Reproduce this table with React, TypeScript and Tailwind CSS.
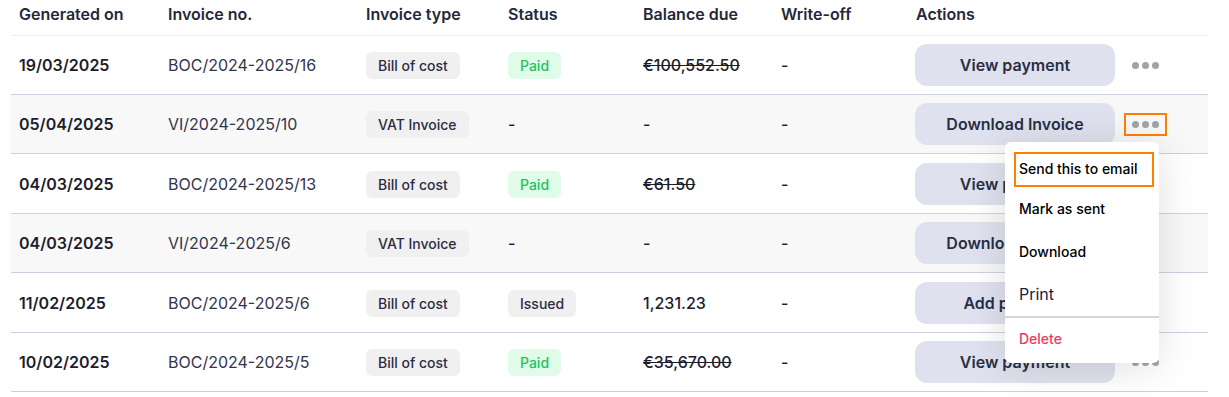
const rows = [
  { date: "19/03/2025", no: "BOC/2024-2025/16", type: "Bill of cost", status: "Paid", balance: "€100,552.50", strike: true, action: "View payment", alt: false, focus: false, h: "h-[59px]" },
  { date: "05/04/2025", no: "VI/2024-2025/10", type: "VAT Invoice", status: "", balance: "-", strike: false, action: "Download Invoice", alt: true, focus: true, h: "h-[59px]" },
  { date: "04/03/2025", no: "BOC/2024-2025/13", type: "Bill of cost", status: "Paid", balance: "€61.50", strike: true, action: "View payment", alt: false, focus: false, h: "h-[60px]" },
  { date: "04/03/2025", no: "VI/2024-2025/6", type: "VAT Invoice", status: "", balance: "-", strike: false, action: "Download Invoice", alt: true, focus: false, h: "h-[59px]" },
  { date: "11/02/2025", no: "BOC/2024-2025/6", type: "Bill of cost", status: "Issued", balance: "1,231.23", strike: false, action: "Add payment", alt: false, focus: false, h: "h-[60px]" },
  { date: "10/02/2025", no: "BOC/2024-2025/5", type: "Bill of cost", status: "Paid", balance: "€35,670.00", strike: true, action: "View payment", alt: false, focus: false, h: "h-[59px]" },
];

const cols = "grid grid-cols-[149px_198px_142px_135px_138px_135px_1fr] pl-2";

function Dots({ focus }: { focus: boolean }) {
  return (
    <div className={"ml-[9px] flex h-[23px] w-[43px] items-center justify-center gap-[3px] " + (focus ? "border-2 border-[#ff8000]" : "")}>
      <span className="h-[7px] w-[7px] rounded-full bg-[#a3a3a3]" />
      <span className="h-[7px] w-[7px] rounded-full bg-[#a3a3a3]" />
      <span className="h-[7px] w-[7px] rounded-full bg-[#a3a3a3]" />
    </div>
  );
}

function Status({ s }: { s: string }) {
  if (!s) return <span>-</span>;
  if (s === "Paid")
    return <span className="rounded-md bg-[#e1fbe9] px-3 py-[5px] text-sm font-medium text-[#22c35e]">Paid</span>;
  return <span className="rounded-md bg-[#f0f0f0] px-3 py-[5px] text-sm font-medium text-[#2b2d42]">{s}</span>;
}

export default function App() {
  return (
    <div className="h-[397px] w-[1229px] overflow-hidden bg-white pl-[11px] text-base text-[#1d1d2c]" style={{ fontFamily: "Inter, 'Noto Sans', sans-serif" }}>
      <div className="relative w-[1197px]">
        <div className={cols + " h-[36px] items-center border-b border-[#ececf0] pb-[7px] font-semibold text-[#25273a]"}>
          <div>Generated on</div>
          <div>Invoice no.</div>
          <div>Invoice type</div>
          <div>Status</div>
          <div>Balance due</div>
          <div>Write-off</div>
          <div>Actions</div>
        </div>
        {rows.map((r, i) => (
          <div key={i} className={cols + " items-center border-b border-[#cfcde0] " + r.h + " " + (r.alt ? "bg-[#f8f8f8]" : "bg-white")}>
            <div className="font-semibold">{r.date}</div>
            <div className="text-[#34344e]">{r.no}</div>
            <div>
              <span className="rounded-md bg-[#f0f0f0] px-3 py-[5px] text-sm font-medium text-[#2b2d42]">{r.type}</span>
            </div>
            <div className="font-medium"><Status s={r.status} /></div>
            <div className={"font-medium " + (r.strike ? "line-through" : "")}>{r.balance}</div>
            <div className="font-medium">-</div>
            <div className="-ml-[1px] flex items-center">
              <button className="h-[42px] w-[200px] rounded-xl bg-[#dfe2ee] font-semibold text-[#2a2e45]">{r.action}</button>
              <Dots focus={r.focus} />
            </div>
          </div>
        ))}

        <div className="absolute left-[994px] top-[142px] w-[154px] rounded-md bg-white pb-[3px] pt-[10px] text-sm font-medium text-black shadow-[0_4px_40px_rgba(0,0,0,0.13)]">
          <div className="ml-[9px] mr-[5px] flex h-[35px] items-center border-2 border-[#ff8000] pb-[2px] pl-[3px]">Send this to email</div>
          <div className="flex h-[44px] items-center pl-[14px]">Mark as sent</div>
          <div className="flex h-[42px] items-center pl-[14px]">Download</div>
          <div className="flex h-[42px] items-center pl-[14px] text-base font-normal text-[#132447]">Print</div>
          <div className="mt-[1px] h-[2px] bg-[#d6d5e0]" />
          <div className="flex h-[42px] items-center pl-[14px] text-[#f33862]">Delete</div>
        </div>
      </div>
    </div>
  );
}
